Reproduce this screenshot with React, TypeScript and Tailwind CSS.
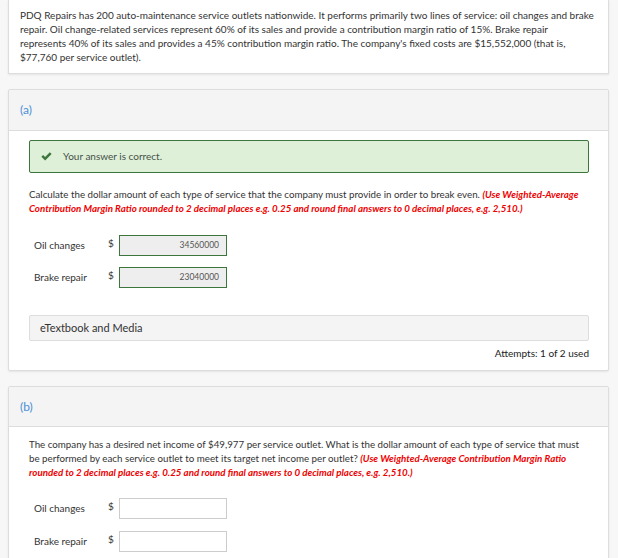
import React from 'react';

const font = { fontFamily: 'Lato, "Open Sans", sans-serif' };

function Check() {
  return (
    <svg width="11" height="9" viewBox="0 0 11 9" className="shrink-0">
      <path d="M0.4 4.7 L2.1 2.9 L4.1 4.9 L8.8 0.2 L10.6 1.9 L4.1 8.4 Z" fill="#3c763d" />
    </svg>
  );
}

function AnswerRow({ label, value, graded }: { label: string; value?: string; graded?: boolean }) {
  return (
    <div className="flex items-center h-[21px]">
      <span className="w-[74px] text-[10px] text-[#333]">{label}</span>
      <span className="w-[11px] text-[10px] text-[#333] self-start mt-[1px]">$</span>
      <div
        className={`w-[108px] h-[21px] flex items-center justify-end pr-[7px] text-[8.5px] text-[#555] ${
          graded ? 'bg-[#eeeeee] border border-[#3c763d]' : 'bg-white border border-[#cccccc]'
        }`}
      >
        {value}
      </div>
    </div>
  );
}

function Hint() {
  return (
    <span className="text-[#ee0000] font-bold italic">
      (Use Weighted-Average Contribution Margin Ratio rounded to 2 decimal places e.g. 0.25 and round final answers to 0 decimal places, e.g. 2,510.)
    </span>
  );
}

export default function App() {
  return (
    <div style={font} className="w-[618px] h-[558px] overflow-hidden bg-[#f7f7f7] px-[8px] text-[#333]">
      {/* Problem statement */}
      <div className="w-[601px] bg-white border border-t-0 border-[#dddddd] shadow-[0_1px_2px_rgba(0,0,0,0.08)] pl-[11px] pr-[14px] pt-[8px] pb-[9px]">
        <p className="text-[10px] leading-[14px] text-[#333]">
          PDQ Repairs has 200 auto-maintenance service outlets nationwide. It performs primarily two lines of service: oil changes and brake repair. Oil change-related services represent 60% of its sales and provide a contribution margin ratio of 15%. Brake repair represents 40% of its sales and provides a 45% contribution margin ratio. The company's fixed costs are $15,552,000 (that is, $77,760 per service outlet).
        </p>
      </div>

      {/* Part (a) */}
      <div className="mt-[15px] w-[601px] bg-white border border-[#dddddd] rounded-[2px] shadow-[0_1px_2px_rgba(0,0,0,0.08)]">
        <div className="h-[41px] bg-[#f4f4f4] border-b border-[#dddddd] flex items-center pl-[11px]">
          <span className="text-[12px] text-[#4a8fd6]">(a)</span>
        </div>
        <div className="pl-[20px] pr-[19px] pt-[9px] pb-[10px]">
          <div className="h-[33px] bg-[#dff0d8] border border-[#3c763d] rounded-[2px] flex items-center pl-[11px] gap-[11px]">
            <Check />
            <span className="text-[10px] text-[#44504a]">Your answer is correct.</span>
          </div>
          <p className="mt-[14px] text-[9.75px] leading-[14px] text-[#333]">
            Calculate the dollar amount of each type of service that the company must provide in order to break even. <Hint />
          </p>
          <div className="mt-[20px] pl-[5px] flex flex-col gap-[11px]">
            <AnswerRow label="Oil changes" value="34560000" graded />
            <AnswerRow label="Brake repair" value="23040000" graded />
          </div>
          <div className="mt-[27px] h-[26px] bg-[#f4f4f4] border border-[#dddddd] rounded-[2px] flex items-center pl-[10px]">
            <span className="text-[11px] text-[#333]">eTextbook and Media</span>
          </div>
          <div className="mt-[5px] text-right text-[10px] leading-[14px] text-[#222]">Attempts: 1 of 2 used</div>
        </div>
      </div>

      {/* Part (b) */}
      <div className="mt-[15px] w-[601px] bg-white border border-[#dddddd] rounded-[2px] shadow-[0_1px_2px_rgba(0,0,0,0.08)]">
        <div className="h-[40px] bg-[#f4f4f4] border-b border-[#dddddd] flex items-center pl-[11px]">
          <span className="text-[12px] text-[#4a8fd6]">(b)</span>
        </div>
        <div className="pl-[20px] pr-[19px] pt-[10px] pb-[10px]">
          <p className="text-[9.75px] leading-[14px] text-[#333]">
            The company has a desired net income of $49,977 per service outlet. What is the dollar amount of each type of service that must be performed by each service outlet to meet its target net income per outlet? <Hint />
          </p>
          <div className="mt-[19px] pl-[5px] flex flex-col gap-[12px]">
            <AnswerRow label="Oil changes" />
            <AnswerRow label="Brake repair" />
          </div>
        </div>
      </div>
    </div>
  );
}
